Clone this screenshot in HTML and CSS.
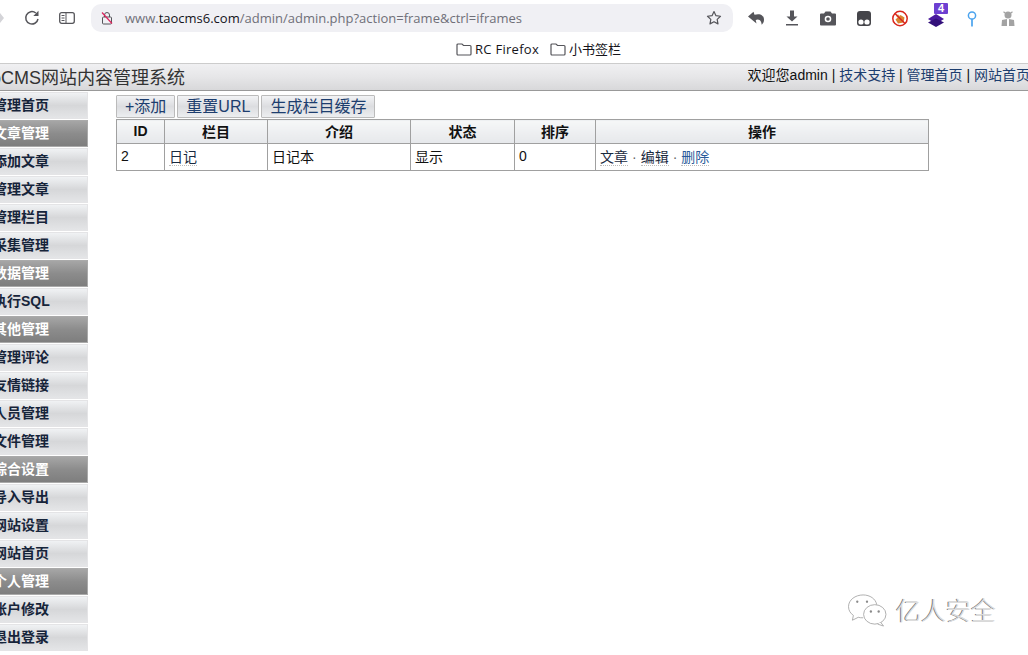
FILE: index.html
```html
<!DOCTYPE html>
<html lang="zh-CN">
<head>
<meta charset="utf-8">
<title>TaoCMS</title>
<link rel="stylesheet" href="styles.css">
</head>
<body>
<div class="toolbar">
  <svg class="ico nav-fwd" viewBox="0 0 8 16"><path d="M0 5.500h3V3l4 5-4 5v-2.500H0z" fill="#d4d4d8" transform="translate(-3 0)"/></svg>
  <svg class="ico reload" viewBox="0 0 16 16"><path d="M14 9A6.200 6.200 0 1 1 11.800 3" fill="none" stroke="#55555a" stroke-width="1.500"/><path d="M14.500 .8v5.200H9.300z" fill="#55555a"/></svg>
  <svg class="ico sidebar-ico" viewBox="0 0 16 12"><rect x="0.700" y="0.700" width="14.600" height="10.600" rx="2" fill="none" stroke="#55555a" stroke-width="1.300"/><path d="M7 1v10M2.500 3.500h3M2.500 6h3M2.500 8.500h3" fill="none" stroke="#55555a"/></svg>
  <div class="urlbar">
    <svg class="lock" viewBox="0 0 12 14"><rect x="1.500" y="6" width="9" height="7" rx="1" fill="none" stroke="#55555a"/><path d="M3.500 6V4a2.500 2.500 0 0 1 5 0v2" fill="none" stroke="#55555a"/><path d="M1 1.500l10 11" stroke="#e0245e" stroke-width="1.200"/></svg>
    <span class="url"><b class="domain"><span class="www">www.</span>taocms6.com</b>/admin/admin.php?action=frame&amp;ctrl=iframes</span>
    <svg class="star" viewBox="0 0 16 16"><path d="M8 1.500l1.950 4.150 4.550.6-3.330 3.120.84 4.500L8 11.650l-4.010 2.220.84-4.500L1.500 6.250l4.550-.6z" fill="none" stroke="#55555a" stroke-width="1.200" stroke-linejoin="round"/></svg>
  </div>
  <div class="exts">
    <svg class="ext" viewBox="0 0 18 18"><path d="M1 7.500L6.500 2.800l1 3c5-1.800 9.500 .2 9.500 5 0 2.200-1 3.700-2.300 5-.3-3-1-5-4-5.300l-2 .6.800 3.400z" fill="#55555a"/></svg>
    <svg class="ext" viewBox="0 0 18 18"><path d="M7 1.500h4v6h3.500L9 12.500 3.500 7.500H7zM3 15h12v1.500H3z" fill="#55555a"/></svg>
    <svg class="ext" viewBox="0 0 18 18"><path d="M2 4.500h3L6.500 2.500h5l1.500 2h3a1 1 0 0 1 1 1v10a1 1 0 0 1-1 1H2a1 1 0 0 1-1-1v-10a1 1 0 0 1 1-1z" fill="#55555a"/><circle cx="9" cy="10" r="3.300" fill="#fff"/><circle cx="9" cy="10" r="1.800" fill="#55555a"/></svg>
    <svg class="ext" viewBox="0 0 18 18"><rect x="2" y="2" width="14" height="15" rx="3" fill="#45454a"/><circle cx="6" cy="13" r="2.600" fill="#fff"/><circle cx="12" cy="13" r="2.600" fill="#fff"/></svg>
    <svg class="ext" viewBox="0 0 18 18"><circle cx="9" cy="9.500" r="7.200" fill="#fff" stroke="#d9261c" stroke-width="1.500"/><path d="M4.500 10.500l5-4.500 4 2.500-1 5-5.500 1z" fill="#d98330"/><circle cx="7" cy="7" r="1.500" fill="#e8a860"/><path d="M4 4.500l10 10" stroke="#d9261c" stroke-width="1.500"/></svg>
    <span class="ext badge-wrap">
      <svg class="ext" viewBox="0 0 18 18"><path d="M9 5l8 5-8 5-8-5z" fill="#4a1a9e"/><path d="M9 9.500l8 4-8 4.500-8-4.500z" fill="#32107a"/></svg>
      <span class="badge">4</span>
    </span>
    <svg class="ext" viewBox="0 0 18 18"><circle cx="9" cy="6.500" r="3.600" fill="none" stroke="#4aa3ee" stroke-width="1.500"/><path d="M9 10v7.500" stroke="#4aa3ee" stroke-width="1.700"/></svg>
    <svg class="ext" viewBox="0 0 18 18"><circle cx="9" cy="6" r="3.500" fill="#a3a3a3"/><path d="M4.500 2.800l2 1.500M13.500 2.800l-2 1.500" stroke="#a3a3a3" stroke-width="1.200"/><path d="M3 11l5-1v7H2.500zM15 11l-5-1v7h5.500z" fill="#a3a3a3"/></svg>
  </div>
</div>
<div class="bookmarks">
  <span class="bm bm-latin"><svg class="folder" viewBox="0 0 16 14"><path d="M1 3a1 1 0 0 1 1-1h4l1.500 1.500H14a1 1 0 0 1 1 1V12a1 1 0 0 1-1 1H2a1 1 0 0 1-1-1z" fill="none" stroke="#55555a" stroke-width="1.200"/></svg>RC Firefox</span>
  <span class="bm"><svg class="folder" viewBox="0 0 16 14"><path d="M1 3a1 1 0 0 1 1-1h4l1.500 1.500H14a1 1 0 0 1 1 1V12a1 1 0 0 1-1 1H2a1 1 0 0 1-1-1z" fill="none" stroke="#55555a" stroke-width="1.200"/></svg>小书签栏</span>
</div>
<header class="top">
  <h1 class="brand">TaoCMS网站内容管理系统</h1>
  <div class="topnav">欢迎您admin | <a>技术支持</a> | <a>管理首页</a> | <a>网站首页</a></div>
</header>
<div class="content">
  <nav class="side">
    <a class="item">管理首页</a>
    <a class="item head">文章管理</a>
    <a class="item">添加文章</a>
    <a class="item">管理文章</a>
    <a class="item">管理栏目</a>
    <a class="item">采集管理</a>
    <a class="item head">数据管理</a>
    <a class="item">执行SQL</a>
    <a class="item head">其他管理</a>
    <a class="item">管理评论</a>
    <a class="item">友情链接</a>
    <a class="item">人员管理</a>
    <a class="item">文件管理</a>
    <a class="item head">综合设置</a>
    <a class="item">导入导出</a>
    <a class="item">网站设置</a>
    <a class="item">网站首页</a>
    <a class="item head">个人管理</a>
    <a class="item">账户修改</a>
    <a class="item">退出登录</a>
  </nav>
  <main class="main">
    <div class="btns">
      <button class="btn">+添加</button>
      <button class="btn">重置URL</button>
      <button class="btn">生成栏目缓存</button>
    </div>
    <table class="grid">
      <colgroup>
        <col class="c1"><col class="c2"><col class="c3"><col class="c4"><col class="c5"><col class="c6">
      </colgroup>
      <thead>
        <tr><th>ID</th><th>栏目</th><th>介绍</th><th>状态</th><th>排序</th><th>操作</th></tr>
      </thead>
      <tbody>
        <tr>
          <td>2</td><td><a class="lnk">日记</a></td><td>日记本</td><td>显示</td><td>0</td>
          <td><a class="lnk">文章</a><i class="dot">·</i><a class="lnk">编辑</a><i class="dot">·</i><a class="lnk del">删除</a></td>
        </tr>
      </tbody>
    </table>
  </main>
</div>
<div class="mark">
  <svg class="wx" viewBox="0 0 42 36"><path d="M17 2C9 2 2 7 2 14c0 4 2 7 5 9l-1 5 6-3c1.500.4 3 .6 5 .5" fill="#fff" stroke="#9a9a9a" stroke-width=".8"/><ellipse cx="29" cy="22" rx="11.500" ry="10" fill="#fff" stroke="#9a9a9a" stroke-width=".8"/><path d="M35 30l3 4-6-2" fill="#fff" stroke="#9a9a9a" stroke-width=".8"/><path d="M17 2c7 0 13 4 14 10" fill="none" stroke="#9a9a9a" stroke-width=".8"/><circle cx="11" cy="9" r="1.200" fill="#8a8a8a"/><circle cx="21" cy="9" r="1.200" fill="#8a8a8a"/><circle cx="25" cy="19" r="1.200" fill="#8a8a8a"/><circle cx="33" cy="19" r="1.200" fill="#8a8a8a"/></svg>
  <span class="mark-text">亿人安全</span>
</div>
</body>
</html>
```
FILE: styles.css
```css
* { box-sizing: border-box; }
html, body { margin: 0; height: 100%; overflow: hidden; background: #fff; }
body { font-family: "Liberation Sans", "Noto Sans CJK SC", sans-serif; font-size: 14px; color: #111; position: relative; }

.toolbar { height: 33px; display: flex; align-items: center; padding-top: 2px; }
.ico { flex: none; }
.nav-fwd { width: 8px; height: 16px; }
.reload { width: 16px; height: 16px; margin-left: 16px; }
.sidebar-ico { width: 16px; height: 12px; margin-left: 19px; }
.urlbar { width: 642px; height: 28px; margin-left: 16px; background: #f0f0f4; border-radius: 10px; display: flex; align-items: center; padding: 0 11px 0 10px; }
.lock { width: 12px; height: 14px; flex: none; }
.url { margin-left: 12px; font-family: "Open Sans", "Noto Sans", sans-serif; font-size: 13px; color: #6f6f78; flex: 1; white-space: nowrap; }
.domain { font-weight: 400; color: #15141a; }
.www { color: #6f6f78; }
.star { width: 16px; height: 16px; flex: none; }
.exts { display: flex; align-items: center; gap: 18px; margin-left: 14px; }
.ext { width: 18px; height: 18px; flex: none; display: block; }
.badge-wrap { position: relative; }
.badge { position: absolute; left: 7px; top: -6px; width: 14px; height: 11px; background: #6d3fd1; color: #fff; font: bold 11px/11px "Liberation Sans", sans-serif; text-align: center; border-radius: 1px; }

.bookmarks { height: 30px; display: flex; justify-content: center; align-items: center; gap: 11px; padding-left: 49px; padding-top: 1px; font-family: "Open Sans", "Noto Sans CJK SC", sans-serif; font-size: 13px; color: #15141a; }
.bm { display: flex; align-items: center; gap: 3px; }
.bm-latin { letter-spacing: .3px; }
.folder { width: 16px; height: 14px; }

.top { height: 28px; border-top: 1px solid #ccc; border-bottom: 1px solid #999; background: linear-gradient(#f0f0f2, #e6e6e8 50%, #d8d8da); display: flex; justify-content: space-between; align-items: center; margin-left: -28px; }
.brand { margin: 0 0 2px; font-size: 18px; font-weight: 400; color: #333; white-space: nowrap; }
.topnav { font-size: 14px; color: #111; white-space: nowrap; margin: 0 -2px 6px 0; }
.topnav a { color: #1c3d6e; }

.content { display: flex; }
.side { flex: none; width: 88px; margin-top: 1px; display: flex; flex-direction: column; gap: 1px; }
.item { height: 27px; display: block; text-indent: -7px; overflow: hidden; white-space: nowrap; font-weight: 700; font-size: 14px; line-height: 25px; color: #16243a; border: 1px solid #e4e4e6; border-left: 0; background: linear-gradient(#f0f2f4, #d6d7d9 50%, #e4e5e7); }
.item.head { color: #fff; border-color: #aaa; background: linear-gradient(#a6a6a6, #8c8c8c 50%, #7e7e7e); }

.main { padding: 4px 0 0 28px; }
.btns { display: flex; gap: 2px; height: 24px; }
.btn { height: 23px; padding: 0 8px; font: 400 16px/20px "Liberation Sans", "Noto Sans CJK SC", sans-serif; color: #1c3d6e; background: linear-gradient(#f2f3f5, #dcdde0 50%, #eceef0); border: 1px solid #bbb; border-radius: 1px; }
.grid { width: 813px; border-collapse: collapse; table-layout: fixed; }
.c1 { width: 48px; } .c2 { width: 103px; } .c3 { width: 143px; } .c4 { width: 104px; } .c5 { width: 81px; }
.grid th, .grid td { border: 1px solid #a0a0a0; padding: 0 4px; font-size: 14px; }
.grid th { height: 24px; padding-bottom: 1px; text-align: center; font-weight: 700; color: #111; background: linear-gradient(#f6f7f8, #e6e8eb); }
.grid td { height: 27px; padding-bottom: 2px; }
.lnk { color: #1a2a40; border-bottom: 1px dotted #bbb; }
.del { color: #2a5a9a; }
.dot { font-style: normal; color: #666; margin: 0 4px; }

.mark { position: absolute; left: 846px; top: 593px; display: flex; align-items: center; gap: 8px; }
.wx { width: 42px; height: 35px; }
.mark-text { font-size: 25px; line-height: 30px; font-weight: 300; color: #dcdcdc; text-shadow: -1px 0 #777; }
```
